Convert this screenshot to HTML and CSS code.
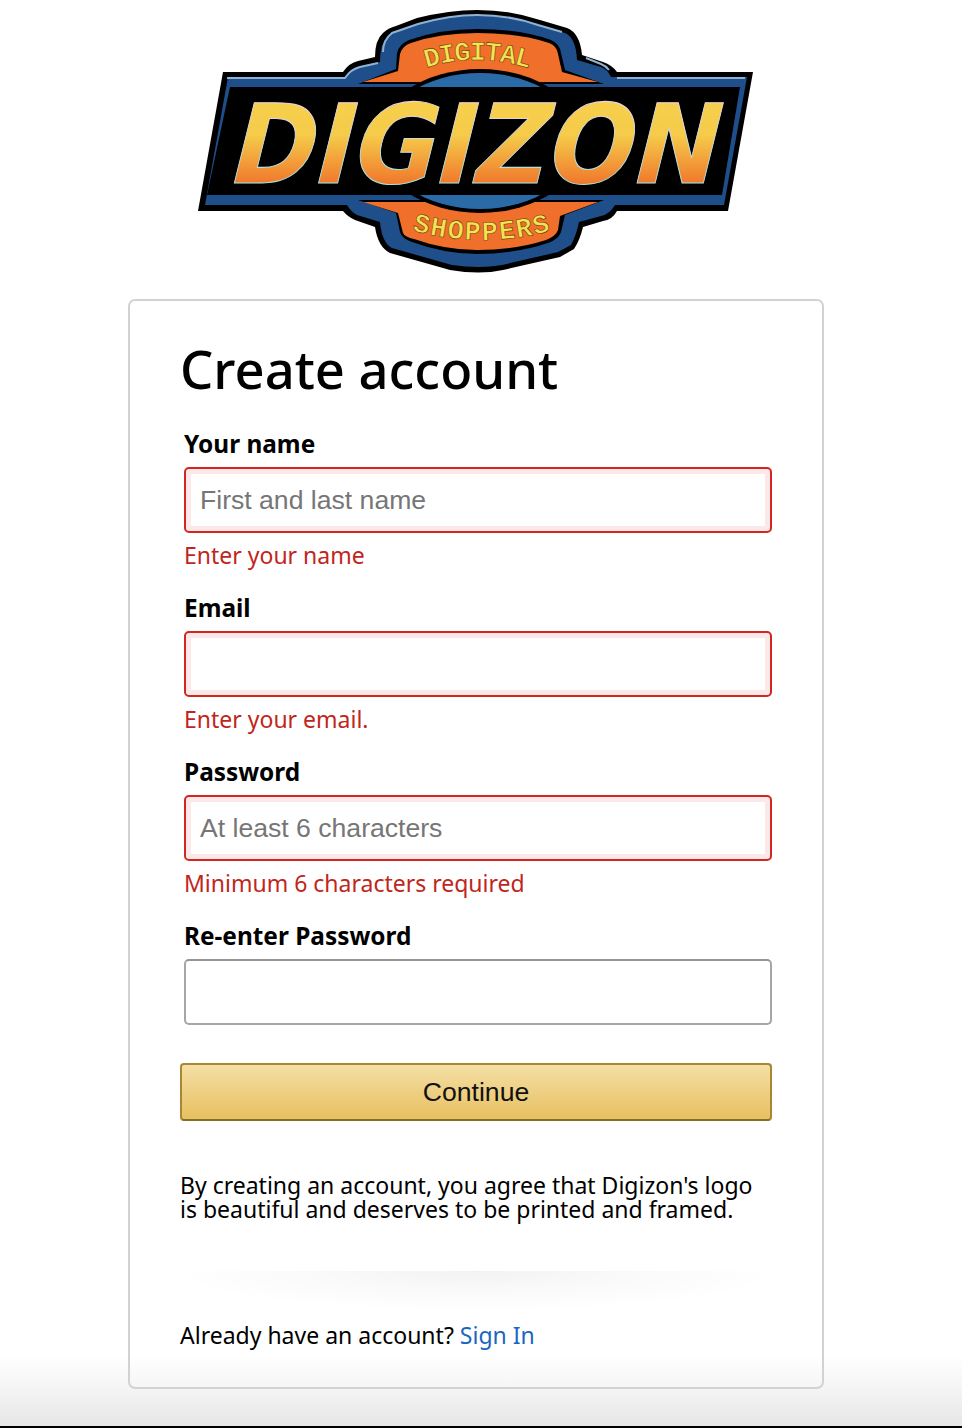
FILE: index.html
```html
<!DOCTYPE html>
<html lang="en">
<head>
    <meta charset="UTF-8">
    <meta name="viewport" content="width=device-width, initial-scale=1.0">
    <title>Create account</title>
    <link rel="stylesheet" href="styles.css">
</head>
<body>
    <div class="page">
        <div class="logo-row">
            <svg class="logo" viewBox="190 0 570 285" width="570" height="285" role="img" aria-label="Digizon">
                <defs>
                    <linearGradient id="letter-fill" x1="0" y1="-83" x2="0" y2="1" gradientUnits="userSpaceOnUse">
                        <stop offset="0" stop-color="#f6d04c"/>
                        <stop offset="0.42" stop-color="#f5cb49"/>
                        <stop offset="1" stop-color="#f0772c"/>
                    </linearGradient>
                    <linearGradient id="letter-edge" x1="0" y1="-83" x2="0" y2="1" gradientUnits="userSpaceOnUse">
                        <stop offset="0" stop-color="#f3d2d8"/>
                        <stop offset="1" stop-color="#a5e3dc"/>
                    </linearGradient>
                    <path id="arc-top" d="M420 70 Q476 50 534 70"/>
                    <path id="arc-bottom" d="M404 228 Q482 252 560 228"/>
                </defs>
                <!-- black outline -->
                <path fill="#000" d="M223 72 L343 72 Q349 63 358 61 L375 57 Q375 40 383 33 Q388 28 396 26 L417 18 Q450 10 477 10 Q510 10 540 20 L567 28 Q580 33 582 55 L603 62 Q612 65 617 72 L753 72 L728 211 L617 211 Q612 220 603 221 L583 227 Q580 240 574 249 L560 257 L503 270 Q480 275 450 270 L390 253 Q378 247 375 227 L355 220 Q348 217 343 211 L198 211 Z"/>
                <!-- blue plate -->
                <path fill="#1f4f8a" d="M228 77 L346 77 Q352 68 360 66 L380 62 Q380 44 387 37 Q391 33 398 31 L419 23 Q450 15 477 15 Q510 15 538 25 L565 33 Q576 38 577 60 L601 67 Q607 69 611 77 L747 77 L724 205 L615 205 Q610 214 601 216 L579 222 Q576 236 571 245 L558 252 L502 265 Q480 269 452 265 L392 248 Q382 243 380 222 L357 215 Q351 212 347 205 L205 205 Z"/>
                <path class="shine" d="M227 78 L345 78 Q351 69 360 67 L378 63"/>
                <path class="shine" d="M383 52 Q383 40 392 33 L418 24 Q450 15 477 15 Q510 15 538 25 L562 32"/>
                <path class="shine" d="M586 58 L601 64 Q606 66 609 70"/>
                <path class="shine" d="M617 78 L745 78"/>
                <!-- orange banners -->
                <path fill="#000" d="M358 84 L396 69 L397 53 Q399 44 409 40 Q440 29 477 29 Q520 29 551 40 Q560 44 561 53 L565 70 L604 84 Z"/>
                <path fill="#f0702b" d="M363 82 L398 71 L400 54 Q402 46 411 43 Q440 33 477 33 Q520 33 549 43 Q557 46 558 54 L562 72 L598 82 Z"/>
                <path fill="#000" d="M358 200 L396 213 L400 232 Q402 239 412 242 Q445 254 477 254 Q515 254 548 243 Q559 239 561 232 L565 215 L604 200 Z"/>
                <path fill="#f0702b" d="M363 202 L398 213 L403 233 Q405 237 414 239 Q445 250 477 250 Q515 250 546 240 Q556 236 558 230 L560 216 L598 202 Z"/>
                <!-- centre disc -->
                <ellipse cx="480" cy="141" rx="104" ry="72" fill="#000"/>
                <ellipse cx="480" cy="141" rx="100" ry="68" fill="#2a6aa6"/>
                <!-- black band -->
                <path fill="#000" d="M230 87 L740 87 L722 195 L207 195 Z"/>
                <text class="logo-word" transform="translate(225 183) skewX(-14) scale(0.9225 1)">DIGIZON</text>
                <text class="logo-small"><textPath href="#arc-top" startOffset="50%" text-anchor="middle">DIGITAL</textPath></text>
                <text class="logo-small wide"><textPath href="#arc-bottom" startOffset="50%" text-anchor="middle">SHOPPERS</textPath></text>
            </svg>
        </div>

        <div class="card">
            <h1>Create account</h1>

            <div class="field">
                <label for="name">Your name</label>
                <input class="has-error" id="name" type="text" placeholder="First and last name">
                <div class="error">Enter your name</div>
            </div>

            <div class="field">
                <label for="email">Email</label>
                <input class="has-error" id="email" type="text">
                <div class="error">Enter your email.</div>
            </div>

            <div class="field">
                <label for="password">Password</label>
                <input class="has-error" id="password" type="password" placeholder="At least 6 characters">
                <div class="error">Minimum 6 characters required</div>
            </div>

            <div class="field last">
                <label for="password2">Re-enter Password</label>
                <input id="password2" type="password">
            </div>

            <button type="button">Continue</button>

            <p class="legal">By creating an account, you agree that Digizon's logo is beautiful and deserves to be printed and framed.</p>

            <div class="divider"></div>

            <p class="signin">Already have an account? <a href="#">Sign In</a></p>
        </div>
    </div>
</body>
</html>
```

FILE: styles.css
```css
html, body {
    margin: 0;
    padding: 0;
}

body {
    font-family: "Noto Sans", Arial, sans-serif;
    color: #000;
    background-color: #fff;
}

.page {
    box-sizing: border-box;
    height: 1428px;
    padding-left: 128px;
    border-bottom: 2px solid #000;
    background: linear-gradient(to bottom, #fff 1355px, #f6f6f6 1385px, #e6e6e6 1426px);
}

.logo-row {
    width: 696px;
    height: 299px;
}

.logo {
    display: block;
    margin-left: 62px;
}

.shine {
    fill: none;
    stroke: #8fb2d2;
    stroke-width: 2;
}

.logo-word {
    font-family: "DejaVu Sans", Arial, sans-serif;
    font-weight: bold;
    font-size: 110px;
    fill: url(#letter-fill);
    stroke: url(#letter-edge);
    stroke-width: 1;
}

.logo-small {
    font-family: "Liberation Mono", monospace;
    font-weight: bold;
    font-size: 27px;
    letter-spacing: -1.5px;
    fill: #f6e24f;
    stroke: #6b3a12;
    stroke-width: 0.6;
}

.logo-small.wide {
    letter-spacing: 1.5px;
}

.card {
    box-sizing: border-box;
    width: 696px;
    height: 1090px;
    padding: 38px 50px;
    border: 2px solid #d2d2d2;
    border-radius: 7px;
}

h1 {
    margin: 0 0 31px 0;
    font-size: 52.5px;
    font-weight: 500;
    line-height: 60px;
}

.field {
    margin-left: 4px;
    margin-bottom: 27px;
}

.field.last {
    margin-bottom: 38px;
}

label {
    display: block;
    margin-bottom: 9px;
    font-size: 24.4px;
    font-weight: 700;
    line-height: 28px;
}

input {
    display: block;
    box-sizing: border-box;
    width: 100%;
    height: 66px;
    padding: 0 14px;
    border: 2px solid #a6a6a6;
    border-top-color: #949494;
    border-radius: 5px;
    outline: none;
    font-family: "Liberation Sans", Arial, sans-serif;
    font-size: 26.6px;
    color: #111;
}

input::placeholder {
    color: #767676;
    opacity: 1;
}

input.has-error {
    border-color: #d0281f;
    box-shadow: inset 0 0 0 5px #fce8e8;
}

.error {
    margin-top: 10px;
    font-size: 23px;
    line-height: 24px;
    color: #c0261c;
}

button {
    display: block;
    box-sizing: border-box;
    width: 100%;
    height: 58px;
    border: 2px solid #a88734;
    border-bottom-color: #846f29;
    border-radius: 4px;
    background: linear-gradient(to bottom, #f4dfa6, #e8c060);
    font-family: "Liberation Sans", Arial, sans-serif;
    font-size: 26.6px;
    color: #111;
    cursor: pointer;
}

.legal {
    margin: 52px 0 50px;
    font-size: 23px;
    line-height: 24px;
}

.divider {
    height: 40px;
    margin-bottom: 12px;
    background: radial-gradient(ellipse 52% 100% at 50% 0, rgba(0, 0, 0, 0.05), rgba(0, 0, 0, 0.025) 45%, rgba(0, 0, 0, 0));
}

.signin {
    margin: 0;
    font-size: 23px;
    line-height: 24px;
}

.signin a {
    color: #1a66c2;
    text-decoration: none;
}
```
